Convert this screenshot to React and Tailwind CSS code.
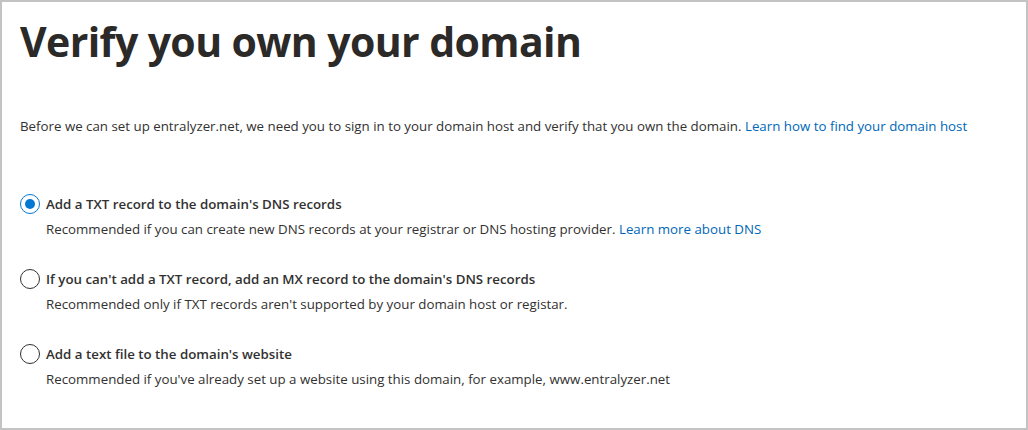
export default function App() {
  const options = [
    {
      id: 'txt',
      label: "Add a TXT record to the domain's DNS records",
      desc: 'Recommended if you can create new DNS records at your registrar or DNS hosting provider.',
      link: 'Learn more about DNS',
      checked: true,
    },
    {
      id: 'mx',
      label: "If you can't add a TXT record, add an MX record to the domain's DNS records",
      desc: "Recommended only if TXT records aren't supported by your domain host or registar.",
    },
    {
      id: 'file',
      label: "Add a text file to the domain's website",
      desc: "Recommended if you've already set up a website using this domain, for example, www.entralyzer.net",
    },
  ]

  return (
    <div className="w-[1028px] h-[430px] bg-white border-2 border-[#c3c3c3] text-[#323130] font-['Segoe_UI','Open_Sans',sans-serif]">
      <div className="pl-[18px] pt-[13px]">
        <h1 className="text-[41px] leading-[52px] font-bold tracking-[-0.6px] text-[#2b2a29]">Verify you own your domain</h1>
        <p className="mt-[50px] text-[13.3px] leading-[18px]">
          Before we can set up entralyzer.net, we need you to sign in to your domain host and verify that you own the domain.{' '}
          <a href="#" className="text-[#0067b8]">Learn how to find your domain host</a>
        </p>
        <div className="mt-[58px] flex flex-col gap-[30px]">
          {options.map(o => (
            <div key={o.id} className="flex gap-[6px]">
              <span className={'mt-[1px] w-[20px] h-[20px] rounded-full border flex items-center justify-center bg-white ' + (o.checked ? 'border-[#0078d4]' : 'border-[#323130]')}>
                {o.checked && <span className="w-[10px] h-[10px] rounded-full bg-[#0078d4]"></span>}
              </span>
              <div>
                <div className="text-[13.3px] leading-[22px] font-semibold">{o.label}</div>
                <div className="mt-[5px] text-[13.3px] leading-[18px]">
                  {o.desc}
                  {o.link && <> <a href="#" className="text-[#0067b8]">{o.link}</a></>}
                </div>
              </div>
            </div>
          ))}
        </div>
      </div>
    </div>
  )
}
